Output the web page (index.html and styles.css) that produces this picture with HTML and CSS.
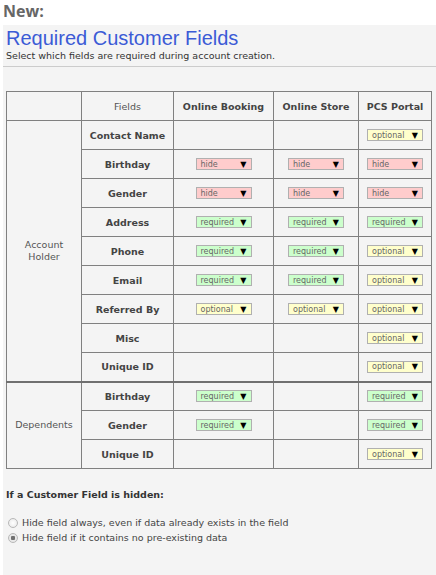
FILE: index.html
```html
<html><head>
<title>Required Customer Fields</title>
<link rel="stylesheet" href="styles.css">
</head><body>

<div class="new">New:</div>

<div class="panel">

<h1>Required Customer Fields</h1>
<div class="sub">Select which fields are required during account creation.</div>
<hr class="rule">

<table class="fields">
  <tr>
    <th class="group"></th>
    <th class="plain">Fields</th>
    <th>Online Booking</th>
    <th>Online Store</th>
    <th>PCS Portal</th>
  </tr>
  <tr>
    <td class="group" rowspan="9">Account<br>Holder</td>
    <td class="name">Contact Name</td>
    <td></td>
    <td></td>
    <td><span class="pick optional">optional<b>&#9660;</b></span></td>
  </tr>
  <tr>
    <td class="name">Birthday</td>
    <td><span class="pick hide">hide<b>&#9660;</b></span></td>
    <td><span class="pick hide">hide<b>&#9660;</b></span></td>
    <td><span class="pick hide">hide<b>&#9660;</b></span></td>
  </tr>
  <tr>
    <td class="name">Gender</td>
    <td><span class="pick hide">hide<b>&#9660;</b></span></td>
    <td><span class="pick hide">hide<b>&#9660;</b></span></td>
    <td><span class="pick hide">hide<b>&#9660;</b></span></td>
  </tr>
  <tr>
    <td class="name">Address</td>
    <td><span class="pick required">required<b>&#9660;</b></span></td>
    <td><span class="pick required">required<b>&#9660;</b></span></td>
    <td><span class="pick required">required<b>&#9660;</b></span></td>
  </tr>
  <tr>
    <td class="name">Phone</td>
    <td><span class="pick required">required<b>&#9660;</b></span></td>
    <td><span class="pick required">required<b>&#9660;</b></span></td>
    <td><span class="pick optional">optional<b>&#9660;</b></span></td>
  </tr>
  <tr>
    <td class="name">Email</td>
    <td><span class="pick required">required<b>&#9660;</b></span></td>
    <td><span class="pick required">required<b>&#9660;</b></span></td>
    <td><span class="pick optional">optional<b>&#9660;</b></span></td>
  </tr>
  <tr>
    <td class="name">Referred By</td>
    <td><span class="pick optional">optional<b>&#9660;</b></span></td>
    <td><span class="pick optional">optional<b>&#9660;</b></span></td>
    <td><span class="pick optional">optional<b>&#9660;</b></span></td>
  </tr>
  <tr>
    <td class="name">Misc</td>
    <td></td>
    <td></td>
    <td><span class="pick optional">optional<b>&#9660;</b></span></td>
  </tr>
  <tr>
    <td class="name">Unique ID</td>
    <td></td>
    <td></td>
    <td><span class="pick optional">optional<b>&#9660;</b></span></td>
  </tr>
  <tr class="split">
    <td class="group" rowspan="3">Dependents</td>
    <td class="name">Birthday</td>
    <td><span class="pick required">required<b>&#9660;</b></span></td>
    <td></td>
    <td><span class="pick required">required<b>&#9660;</b></span></td>
  </tr>
  <tr>
    <td class="name">Gender</td>
    <td><span class="pick required">required<b>&#9660;</b></span></td>
    <td></td>
    <td><span class="pick required">required<b>&#9660;</b></span></td>
  </tr>
  <tr>
    <td class="name">Unique ID</td>
    <td></td>
    <td></td>
    <td><span class="pick optional">optional<b>&#9660;</b></span></td>
  </tr>
</table>

<div class="hidden-title">If a Customer Field is hidden:</div>
<label class="choice"><input type="radio" name="hidden"> Hide field always, even if data already exists in the field</label>
<label class="choice"><input type="radio" name="hidden" checked> Hide field if it contains no pre-existing data</label>

</div>

</body></html>
```

FILE: styles.css
```css
body {
  margin:0;
  background-color:#ffffff;
  font-family:"DejaVu Sans", Verdana, sans-serif;
}
div.new {
  font-family:"Open Sans", "DejaVu Sans", sans-serif;
  font-weight:bold;
  font-size:16px;
  color:#666666;
  padding-left:3px;
  height:25px;
  line-height:22px;
}
div.panel {
  background-color:#f4f4f4;
  margin-left:3px;
  height:550px;
  padding-top:1px;
}
h1 {
  font-family:"Liberation Sans", Arial, sans-serif;
  font-weight:normal;
  font-size:20px;
  color:#3b5bd6;
  margin:0;
  padding-left:3px;
  line-height:24px;
}
div.sub {
  font-size:9.5px;
  color:#333333;
  padding-left:3px;
  line-height:12px;
}
hr.rule {
  border:0;
  border-top:1px solid #cccccc;
  margin:4px 0 0 0;
}
table.fields {
  border-collapse:collapse;
  margin-top:24px;
  margin-left:3px;
  width:426px;
  table-layout:fixed;
}
table.fields th, table.fields td {
  border:1px solid #808080;
  height:29px;
  padding:0;
  text-align:center;
  vertical-align:middle;
  font-size:9.5px;
  color:#444444;
}
table.fields th {
  font-weight:bold;
}
table.fields th.group { width:74px; }
table.fields th.plain { width:91px; font-weight:normal; color:#555555; }
table.fields th:nth-child(3) { width:99px; }
table.fields th:nth-child(4) { width:84px; }
table.fields td.name {
  font-weight:bold;
}
table.fields td.group {
  color:#555555;
  line-height:12px;
}
table.fields tr.split td {
  border-top:2px solid #707070;
}
span.pick {
  display:inline-flex;
  align-items:center;
  justify-content:space-between;
  box-sizing:border-box;
  width:56px;
  height:12px;
  border:1px solid #b0b0b0;
  padding:0 4px 0 4px;
  font-size:8px;
  font-weight:normal;
  color:#666666;
  text-align:left;
}
span.pick b {
  font-size:8px;
  color:#000000;
}
span.hide { background-color:#ffcccc; }
span.required { background-color:#ccffcc; }
span.optional { background-color:#ffffcc; }
div.hidden-title {
  font-size:9.5px;
  font-weight:bold;
  color:#333333;
  margin-top:20px;
  padding-left:3px;
}
label.choice {
  display:flex;
  align-items:center;
  font-size:9.5px;
  color:#444444;
  padding-left:3px;
  height:15px;
}
label.choice:first-of-type {
  margin-top:15px;
}
label.choice input {
  appearance:none;
  -webkit-appearance:none;
  box-sizing:border-box;
  margin:0 4px 0 2px;
  width:10px;
  height:10px;
  border:1px solid #b8b8b8;
  border-radius:50%;
  background:radial-gradient(circle, #ffffff 0%, #e6e6e6 100%);
}
label.choice input:checked {
  background:radial-gradient(circle, #707070 0, #707070 2px, #e8e8e8 2.5px, #e8e8e8 100%);
}
```
